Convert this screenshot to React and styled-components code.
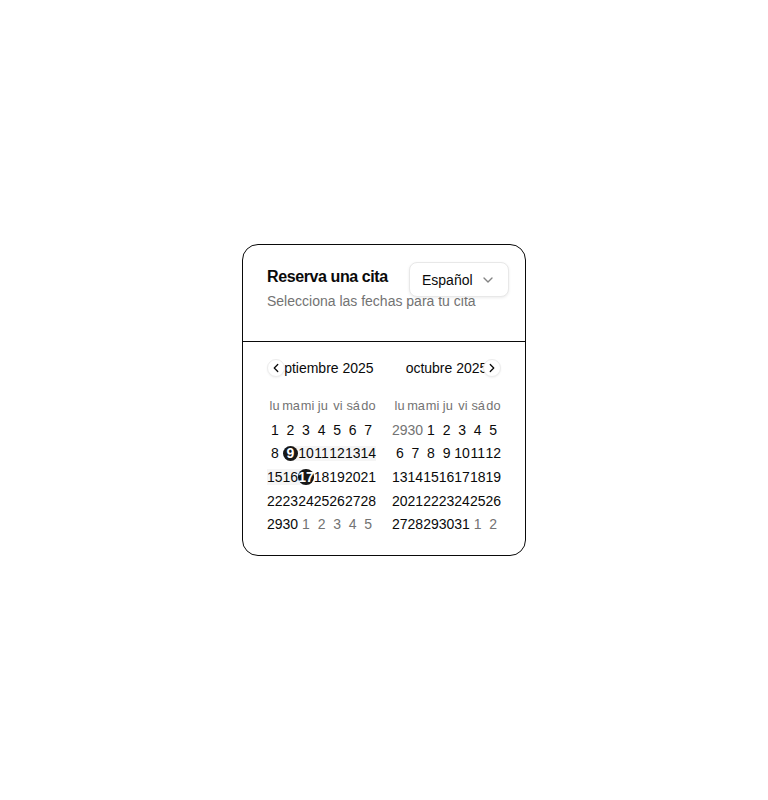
import styled, { createGlobalStyle } from "styled-components";
import { ChevronDown, ChevronLeft, ChevronRight } from "lucide-react";

const GlobalStyle = createGlobalStyle`
  * { box-sizing: border-box; }
  body {
    margin: 0;
    font-family: "Liberation Sans", Arial, sans-serif;
    color: #0a0a0a;
    background: #fff;
  }
`;

const WEEKDAYS = ["lu", "ma", "mi", "ju", "vi", "sá", "do"];

// 5 weeks starting on monday, with days of the next/previous month marked
function buildMonth(year, month) {
  const first = new Date(year, month, 1);
  const offset = (first.getDay() + 6) % 7;
  const days = [];
  for (let i = 0; i < 35; i++) {
    const d = new Date(year, month, 1 - offset + i);
    days.push({ n: d.getDate(), outside: d.getMonth() !== month, month: d.getMonth() });
  }
  let weeks = [];
  for (let i = 0; i < days.length; i += 7) weeks.push(days.slice(i, i + 7));
  return weeks;
}

function rangeState(day) {
  if (day.outside || day.month !== 8) return null;
  if (day.n === 9) return "start";
  if (day.n === 17) return "end";
  if (day.n > 9 && day.n < 17) return "middle";
  return null;
}

const months = [
  { label: "septiembre 2025", weeks: buildMonth(2025, 8) },
  { label: "octubre 2025", weeks: buildMonth(2025, 9) },
];

function App() {
  return (
    <Page>
      <GlobalStyle />
      <Card>
        <Header>
          <HeaderText>
            <Title>Reserva una cita</Title>
            <Description>Selecciona las fechas para tu cita</Description>
          </HeaderText>
          <SelectTrigger>
            Español
            <ChevronDown size={16} strokeWidth={2} />
          </SelectTrigger>
        </Header>
        <CalendarWrap>
          <NavButton side="left">
            <ChevronLeft size={14} strokeWidth={2.2} />
          </NavButton>
          <NavButton side="right">
            <ChevronRight size={14} strokeWidth={2.2} />
          </NavButton>
          {months.map((m) => (
            <Month key={m.label}>
              <Caption>{m.label}</Caption>
              <WeekRow>
                {WEEKDAYS.map((w) => (
                  <Weekday key={w}>{w}</Weekday>
                ))}
              </WeekRow>
              {m.weeks.map((week, wi) => (
                <DayRow key={wi}>
                  {week.map((day, di) => {
                    const r = rangeState(day);
                    return (
                      <DayCell key={di} range={r}>
                        <DayButton
                          outside={day.outside}
                          selected={r === "start" || r === "end"}
                        >
                          {day.n}
                        </DayButton>
                      </DayCell>
                    );
                  })}
                </DayRow>
              ))}
            </Month>
          ))}
        </CalendarWrap>
      </Card>
    </Page>
  );
}

var Page = styled.div`
    min-height: 100vh;
    display: flex;
    align-items: center;
    justify-content: center;
  `,
  Card = styled.div`
    width: 284px;
    border: 1px solid #0a0a0a;
    border-radius: 16px;
    background: #fff;
    overflow: hidden;
  `,
  Header = styled.div`
    display: flex;
    justify-content: space-between;
    align-items: flex-start;
    padding: 24px 24px 30px;
    border-bottom: 1px solid #0a0a0a;
  `,
  HeaderText = styled.div`
    display: flex;
    flex-direction: column;
    gap: 6px;
    white-space: nowrap;
  `,
  Title = styled.div`
    font-size: 16px;
    line-height: 16px;
    font-weight: 700;
    letter-spacing: -0.4px;
  `,
  Description = styled.div`
    font-size: 14px;
    line-height: 20px;
    color: #737373;
  `,
  SelectTrigger = styled.button`
    flex-shrink: 0;
    height: 35px;
    width: 100px;
    margin: -7px -8px 0 -100px;
    position: relative;
    display: flex;
    align-items: center;
    justify-content: space-between;
    padding: 0 12px;
    background: #fff;
    border: 1px solid #e8e8e8;
    border-radius: 8px;
    box-shadow: 0 1px 3px rgba(0, 0, 0, 0.08);
    font-family: inherit;
    font-size: 14px;
    color: #0a0a0a;
    svg {
      color: #0a0a0a;
      opacity: 0.5;
    }
  `,
  CalendarWrap = styled.div`
    position: relative;
    display: flex;
    gap: 16px;
    padding: 17px 24px 23px;
  `,
  NavButton = styled.button`
    position: absolute;
    top: 17px;
    ${(p) => (p.side === "left" ? "left: 24px;" : "right: 24px;")}
    width: 18px;
    height: 18px;
    z-index: 2;
    padding: 0;
    display: flex;
    align-items: center;
    justify-content: center;
    border-radius: 50%;
    border: 1px solid #ececec;
    background: #fff;
    box-shadow: 0 1px 2px rgba(0, 0, 0, 0.06);
    color: #0a0a0a;
  `,
  Month = styled.div`
    width: 109px;
    display: flex;
    flex-direction: column;
  `,
  Caption = styled.div`
    height: 18px;
    display: flex;
    align-items: center;
    justify-content: center;
    white-space: nowrap;
    font-size: 14px;
    margin-bottom: 19px;
  `,
  WeekRow = styled.div`
    display: grid;
    grid-template-columns: repeat(7, 1fr);
    height: 18px;
  `,
  Weekday = styled.div`
    display: flex;
    align-items: center;
    justify-content: center;
    font-size: 12.8px;
    color: #737373;
    white-space: nowrap;
  `,
  DayRow = styled.div`
    display: grid;
    grid-template-columns: repeat(7, 1fr);
    margin-top: 8px;
  `,
  DayCell = styled.div`
    aspect-ratio: 1;
    display: flex;
    align-items: center;
    justify-content: center;
    background: ${(p) => (p.range ? "#f5f5f5" : "transparent")};
    border-radius: ${(p) =>
      p.range === "start" ? "50% 0 0 50%" : p.range === "end" ? "0 50% 50% 0" : "0"};
  `,
  DayButton = styled.div`
    width: 100%;
    height: 100%;
    display: flex;
    align-items: center;
    justify-content: center;
    font-size: 14px;
    white-space: nowrap;
    border-radius: 50%;
    font-weight: ${(p) => (p.selected ? 700 : 400)};
    color: ${(p) => (p.selected ? "#fff" : p.outside ? "#737373" : "#0a0a0a")};
    background: ${(p) => (p.selected ? "#171717" : "transparent")};
  `;

export default App;
